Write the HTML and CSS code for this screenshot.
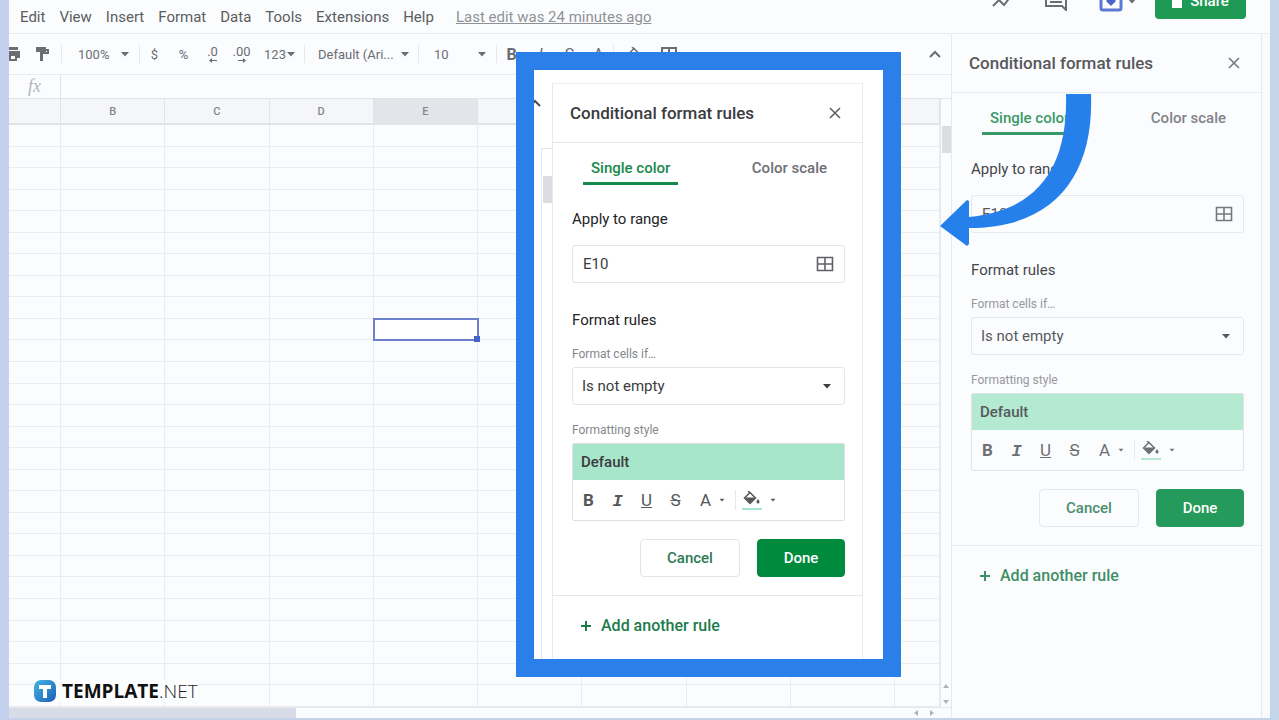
FILE: index.html
```html
<!DOCTYPE html>
<html lang="en">
<head>
    <meta charset="UTF-8">
    <meta name="viewport" content="width=device-width, initial-scale=1.0">
    <title>Conditional format rules</title>
    <link rel="stylesheet" href="styles.css">
</head>
<body>

<!-- Shared icons -->
<svg class="icon-defs" aria-hidden="true">
    <symbol id="i-caret" viewBox="0 0 10 10"><path d="M1 3h8L5 7.500z" fill="currentColor"/></symbol>
    <symbol id="i-close" viewBox="0 0 12 12"><path d="M1 1l10 10M11 1L1 11" fill="none" stroke="currentColor" stroke-width="1.600"/></symbol>
    <symbol id="i-grid" viewBox="0 0 18 16"><path d="M1.500 1.500h15v13h-15zM1.500 8h15M9 1.500v13" fill="none" stroke="currentColor" stroke-width="1.600"/></symbol>
    <symbol id="i-plus" viewBox="0 0 12 12"><path d="M6 1v10M1 6h10" fill="none" stroke="currentColor" stroke-width="2"/></symbol>
    <symbol id="i-chevron" viewBox="0 0 12 8"><path d="M1 7l5-5 5 5" fill="none" stroke="currentColor" stroke-width="2"/></symbol>
    <symbol id="i-fill" viewBox="0 0 18 14"><path d="M5 0l2 2" stroke="currentColor" stroke-width="1.500"/><path d="M7 1.500l5.500 5.500L7 12.500 1.500 7z" fill="none" stroke="currentColor" stroke-width="1.500"/><path d="M2 6.500h10.500L7 12.500z" fill="currentColor"/><path d="M15 8c1 1.500 1.500 2 1.500 3a1.500 1.500 0 0 1-3 0c0-1 .5-1.500 1.500-3z" fill="currentColor"/></symbol>
    <symbol id="i-paint" viewBox="0 0 16 16"><path d="M2 1h10v2h3v5H9v7H6V6h7V5h-1v1H2z" fill="currentColor"/></symbol>
    <symbol id="i-print" viewBox="0 0 16 16"><path d="M3 1h10v3H3zM1 5h14v7h-3v3H4v-3H1zm5 5v3h4v-3z" fill="currentColor" fill-rule="evenodd"/></symbol>
    <symbol id="i-borders" viewBox="0 0 16 14"><path d="M1 1h14v12H1zM1 7h14M8 1v12" fill="none" stroke="currentColor" stroke-width="2"/></symbol>
</svg>

<div class="window">
    <header class="menubar">
        <nav class="menus">
            <a href="#">Edit</a>
            <a href="#">View</a>
            <a href="#">Insert</a>
            <a href="#">Format</a>
            <a href="#">Data</a>
            <a href="#">Tools</a>
            <a href="#">Extensions</a>
            <a href="#">Help</a>
            <a href="#" class="last-edit">Last edit was 24 minutes ago</a>
        </nav>
        <div class="actions">
            <button class="action" aria-label="Activity"><svg width="22" height="16" viewBox="0 0 22 16"><path d="M2 13l6-6 5 5 7-9" fill="none" stroke="currentColor" stroke-width="2"/></svg></button>
            <button class="action" aria-label="Comments"><svg width="22" height="20" viewBox="0 0 22 20"><path d="M1 1h20v18l-4-4H1zM5 5h12M5 8h12M5 11h12" fill="none" stroke="currentColor" stroke-width="2"/></svg></button>
            <button class="action meet" aria-label="Present">
                <svg width="24" height="22" viewBox="0 0 24 22"><rect x="2" y="2" width="20" height="18" rx="2" fill="#fff" stroke="#5b78d6" stroke-width="3"/><path d="M12 6l5 5-5 5-5-5z" fill="#4c64cc"/></svg>
                <svg width="10" height="10"><use href="#i-caret"/></svg>
            </button>
            <button class="share"><svg width="10" height="14" viewBox="0 0 10 14"><path d="M0 6h10v8H0z" fill="#fff"/><path d="M2 6V3a3 3 0 0 1 6 0v3" fill="none" stroke="#fff" stroke-width="2"/></svg>Share</button>
        </div>
    </header>

    <div class="workspace">
        <main class="editor">
            <div class="toolbar">
                <button class="tool tool-half" aria-label="Print"><svg width="16" height="16"><use href="#i-print"/></svg></button>
                <button class="tool tool-paint" aria-label="Paint format"><svg width="16" height="16"><use href="#i-paint"/></svg></button>
                <span class="rule"></span>
                <button class="tool tool-menu">100% <svg width="10" height="10"><use href="#i-caret"/></svg></button>
                <span class="rule"></span>
                <button class="tool">$</button>
                <button class="tool">%</button>
                <button class="tool tool-decimal">.0<svg width="8" height="5" viewBox="0 0 8 5"><path d="M3 0v2h5v1H3v2L0 2.500z" fill="currentColor"/></svg></button>
                <button class="tool tool-decimal">.00<svg width="8" height="5" viewBox="0 0 8 5"><path d="M5 0v2H0v1h5v2l3-2.500z" fill="currentColor"/></svg></button>
                <button class="tool tool-format">123<svg width="10" height="10"><use href="#i-caret"/></svg></button>
                <span class="rule"></span>
                <button class="tool tool-font">Default (Ari... <svg width="10" height="10"><use href="#i-caret"/></svg></button>
                <span class="rule"></span>
                <button class="tool tool-size">10 <svg width="10" height="10"><use href="#i-caret"/></svg></button>
                <span class="rule"></span>
                <button class="tool tool-style"><b>B</b></button>
                <button class="tool tool-style"><i>I</i></button>
                <button class="tool tool-style"><s>S</s></button>
                <button class="tool tool-style">A</button>
                <span class="rule"></span>
                <button class="tool tool-wide" aria-label="Fill color"><svg width="18" height="14"><use href="#i-fill"/></svg></button>
                <button class="tool" aria-label="Borders"><svg width="16" height="14"><use href="#i-borders"/></svg></button>
                <button class="tool tool-collapse" aria-label="Hide the menus"><svg width="12" height="8"><use href="#i-chevron"/></svg></button>
            </div>
            <div class="formula">
                <span class="fx">fx</span>
                <input type="text" class="formula-input" aria-label="Formula">
            </div>
            <div class="sheet">
                <table class="cells">
                    <colgroup>
                        <col class="col-first"><col><col><col><col><col><col><col><col><col class="col-last">
                    </colgroup>
                    <thead>
                        <tr><th></th><th>B</th><th>C</th><th>D</th><th class="active">E</th><th></th><th></th><th></th><th></th><th></th></tr>
                    </thead>
                    <tbody id="rows"></tbody>
                </table>
                <div class="vscroll">
                    <span class="vthumb"></span>
                    <svg width="6" height="22" viewBox="0 0 6 22"><path d="M0 5h6L3 1zM0 17h6l-3 4z" fill="currentColor"/></svg>
                </div>
            </div>
            <div class="hscroll">
                <span class="hthumb"></span>
                <svg width="22" height="6" viewBox="0 0 22 6"><path d="M5 0v6L1 3zM17 0v6l4-3z" fill="currentColor"/></svg>
            </div>
            <div class="brand">
                <svg width="22" height="22" viewBox="0 0 22 22"><defs><linearGradient id="logo" x2="1" y2="1"><stop offset="0" stop-color="#45b5e4"/><stop offset="1" stop-color="#1b5fb4"/></linearGradient></defs><rect width="22" height="22" rx="7" fill="url(#logo)"/><path d="M5 5h12v4h-4v9H9V9H5z" fill="#fff"/></svg>
                <span class="brand-name"><b>TEMPLATE</b>.NET</span>
            </div>
        </main>

        <aside class="side">
            <section class="panel panel-dim">
                <div class="panel-head">
                    <h2>Conditional format rules</h2>
                    <button class="icon-btn" aria-label="Close"><svg width="12" height="12"><use href="#i-close"/></svg></button>
                </div>
                <div class="tabs">
                    <button class="tab tab-on">Single color</button>
                    <button class="tab">Color scale</button>
                </div>
                <form class="panel-form">
                    <label class="heading" for="range-side">Apply to range</label>
                    <div class="field">
                        <input type="text" id="range-side" value="E10">
                        <button type="button" class="icon-btn" aria-label="Select data range"><svg width="18" height="16"><use href="#i-grid"/></svg></button>
                    </div>
                    <h3 class="heading">Format rules</h3>
                    <label class="hint" for="rule-side">Format cells if…</label>
                    <div class="field select-field">
                        <select id="rule-side"><option>Is not empty</option></select>
                        <svg width="10" height="10"><use href="#i-caret"/></svg>
                    </div>
                    <span class="hint">Formatting style</span>
                    <div class="style-box">
                        <button type="button" class="style-default">Default</button>
                        <div class="style-tools">
                            <button type="button"><b>B</b></button>
                            <button type="button"><i>I</i></button>
                            <button type="button"><u>U</u></button>
                            <button type="button"><s>S</s></button>
                            <button type="button" class="with-caret">A<svg width="6" height="6"><use href="#i-caret"/></svg></button>
                            <span class="rule"></span>
                            <button type="button" class="with-caret" aria-label="Fill color"><span class="fill"><svg width="18" height="14"><use href="#i-fill"/></svg></span><svg width="6" height="6"><use href="#i-caret"/></svg></button>
                        </div>
                    </div>
                    <div class="buttons">
                        <button type="button" class="btn">Cancel</button>
                        <button type="button" class="btn btn-done">Done</button>
                    </div>
                </form>
                <button class="add-rule"><svg width="12" height="12"><use href="#i-plus"/></svg>Add another rule</button>
            </section>
            <svg class="pointer" width="156" height="156" viewBox="0 0 156 156"><path d="M128 2H153C156 83 117 136 31 136V152L29 154 2 134 29 108 31 109V125C102 118 130 73 128 2z" fill="#2680eb"/></svg>
        </aside>

        <div class="callout">
            <div class="callout-edge">
                <svg width="12" height="8"><use href="#i-chevron"/></svg>
                <div class="vscroll"><span class="vthumb"></span></div>
            </div>
            <section class="panel">
                <div class="panel-head">
                    <h2>Conditional format rules</h2>
                    <button class="icon-btn" aria-label="Close"><svg width="12" height="12"><use href="#i-close"/></svg></button>
                </div>
                <div class="tabs">
                    <button class="tab tab-on">Single color</button>
                    <button class="tab">Color scale</button>
                </div>
                <form class="panel-form">
                    <label class="heading" for="range">Apply to range</label>
                    <div class="field">
                        <input type="text" id="range" value="E10">
                        <button type="button" class="icon-btn" aria-label="Select data range"><svg width="18" height="16"><use href="#i-grid"/></svg></button>
                    </div>
                    <h3 class="heading">Format rules</h3>
                    <label class="hint" for="rule">Format cells if…</label>
                    <div class="field select-field">
                        <select id="rule"><option>Is not empty</option></select>
                        <svg width="10" height="10"><use href="#i-caret"/></svg>
                    </div>
                    <span class="hint">Formatting style</span>
                    <div class="style-box">
                        <button type="button" class="style-default">Default</button>
                        <div class="style-tools">
                            <button type="button"><b>B</b></button>
                            <button type="button"><i>I</i></button>
                            <button type="button"><u>U</u></button>
                            <button type="button"><s>S</s></button>
                            <button type="button" class="with-caret">A<svg width="6" height="6"><use href="#i-caret"/></svg></button>
                            <span class="rule"></span>
                            <button type="button" class="with-caret" aria-label="Fill color"><span class="fill"><svg width="18" height="14"><use href="#i-fill"/></svg></span><svg width="6" height="6"><use href="#i-caret"/></svg></button>
                        </div>
                    </div>
                    <div class="buttons">
                        <button type="button" class="btn">Cancel</button>
                        <button type="button" class="btn btn-done">Done</button>
                    </div>
                </form>
                <button class="add-rule"><svg width="12" height="12"><use href="#i-plus"/></svg>Add another rule</button>
            </section>
        </div>
    </div>
</div>

<script src="script.js"></script>
</body>
</html>
```

FILE: styles.css
```css
/* --- Base --- */
* {
    box-sizing: border-box;
}

body {
    margin: 0;
    background: linear-gradient(90deg, #c3d0ee, #c5d5e9);
    font-family: Roboto, "Liberation Sans", sans-serif;
    font-size: 15px;
    color: #4a4c50;
}

button,
input,
select {
    font: inherit;
    color: inherit;
    background: none;
    border: none;
    padding: 0;
    margin: 0;
}

h2,
h3 {
    margin: 0;
}

svg {
    display: block;
    flex: none;
}

.icon-defs {
    display: none;
}

.window {
    display: flex;
    flex-direction: column;
    height: 100vh;
    margin: 0 9px;
    border-bottom: 2px solid #c5d3ea;
    background: #fbfcfe;
    overflow: hidden;
}

/* --- Menu bar --- */
.menubar {
    display: flex;
    justify-content: space-between;
    height: 34px;
    border-bottom: 1px solid #eaebef;
}

.menus {
    display: flex;
    align-items: center;
    gap: 14px;
    padding-left: 11px;
}

.menus a {
    color: #5a5c60;
    text-decoration: none;
}

.menus .last-edit {
    margin-left: 8px;
    color: #909297;
    text-decoration: underline;
}

/* the title row is scrolled half out of view */
.actions {
    display: flex;
    align-items: center;
    gap: 32px;
    height: 36px;
    margin-top: -17px;
    padding-right: 24px;
    color: #6b6d72;
}

.action {
    display: flex;
    align-items: center;
    gap: 4px;
}

.share {
    display: flex;
    align-items: center;
    justify-content: center;
    gap: 8px;
    width: 91px;
    height: 36px;
    margin-left: -14px;
    border-radius: 4px;
    background: #1e9a55;
    color: #fff;
    font-weight: 500;
}

/* --- Editor --- */
.workspace {
    position: relative;
    display: flex;
    flex: 1;
    min-height: 0;
}

.editor {
    position: relative;
    display: flex;
    flex-direction: column;
    flex: 1;
    min-width: 0;
}

.toolbar {
    display: flex;
    align-items: center;
    height: 41px;
    padding-left: 1px;
    border-bottom: 1px solid #eaebef;
    font-size: 13px;
    color: #6b6d72;
}

.tool {
    display: flex;
    align-items: center;
    justify-content: center;
    width: 29px;
    color: #6b6d72;
}

.tool-half {
    width: 18px;
    margin-left: -6px;
}

.tool-paint {
    width: 39px;
}

.tool-menu {
    justify-content: space-between;
    width: 77px;
    padding: 0 9px 0 16px;
}

.tool-decimal {
    flex-direction: column;
    align-items: center;
    line-height: 13px;
}

.tool-format {
    width: 48px;
}

.tool-font {
    justify-content: space-between;
    width: 113px;
    padding: 0 8px 0 13px;
}

.tool-size {
    justify-content: space-between;
    width: 77px;
    padding: 0 9px 0 15px;
}

.tool-style {
    font-size: 16px;
}

.tool-wide {
    width: 36px;
    margin-left: 4px;
}

.tool-collapse {
    width: 33px;
    margin-left: auto;
}

.toolbar .rule {
    width: 1px;
    height: 18px;
    background: #e6e7eb;
}

.formula {
    display: flex;
    height: 23px;
}

.fx {
    width: 52px;
    border-right: 1px solid #e2e3e7;
    text-align: center;
    font: italic 18px/22px "Liberation Serif", serif;
    color: #b4b6bb;
}

.formula-input {
    flex: 1;
}

.sheet {
    display: flex;
    flex: 1;
    min-height: 0;
}

.cells {
    flex: 1;
    width: 100%;
    height: 100%;
    table-layout: fixed;
    border-collapse: separate;
    border-spacing: 0;
}

.col-first {
    width: 52px;
}

.col-last {
    width: 45px;
}

.cells th {
    height: 27px;
    padding: 0;
    border: solid #e2e3e7;
    border-width: 1px 1px 2px 0;
    background: #f5f6f9;
    font-size: 11px;
    font-weight: 500;
    color: #85878c;
}

.cells th.active {
    background: #e4e5ea;
}

.cells td {
    padding: 0;
    border: solid #ebecf0;
    border-width: 0 1px 1px 0;
}

.cells td.selected {
    position: relative;
    outline: 2px solid #6c80cf;
    outline-offset: -1px;
    background: #fff;
}

.cells td.selected::after {
    content: "";
    position: absolute;
    right: -3px;
    bottom: -3px;
    width: 6px;
    height: 6px;
    background: #4564cb;
}

.vscroll {
    display: flex;
    flex-direction: column;
    justify-content: space-between;
    align-items: center;
    width: 11px;
    padding: 27px 0 2px;
    border: solid #e6e7eb;
    border-width: 1px 0 0 1px;
    color: #b0b2b8;
}

.vthumb {
    width: 9px;
    height: 27px;
    background: #dcdde1;
}

.hscroll {
    display: flex;
    align-items: center;
    justify-content: space-between;
    height: 11px;
    padding-right: 16px;
    border-top: 1px solid #e6e7eb;
    color: #b0b2b8;
}

.hthumb {
    width: 31%;
    height: 10px;
    background: #d8dce7;
}

/* --- Watermark over the sheet --- */
.brand {
    position: absolute;
    left: 25px;
    bottom: 16px;
    display: flex;
    align-items: center;
    gap: 6px;
    background: #fcfdfe;
}

.brand-name {
    font: 300 19px/22px "Open Sans", "Noto Sans", sans-serif;
    color: #222;
}

.brand-name b {
    font-weight: 700;
    color: #111;
}

/* --- Side area --- */
.side {
    position: relative;
    width: 319px;
    padding-right: 8px;
    background: #f8fafe;
}

.side .panel {
    height: 100%;
}

.pointer {
    position: absolute;
    left: -13px;
    top: 58px;
}

/* --- Rules panel --- */
.panel {
    width: 311px;
    border: solid #e8e9ed;
    border-width: 0 1px;
    background: #fff;
    color: #3a3c40;
}

.panel-dim {
    background: #fbfcfe;
}

.panel-dim > * {
    opacity: 0.85;
}

.panel-head {
    display: flex;
    align-items: center;
    justify-content: space-between;
    height: 59px;
    padding: 0 21px 0 17px;
    border-bottom: 1px solid #e6e7eb;
}

.panel-head h2 {
    font-size: 17px;
    font-weight: 500;
}

.icon-btn {
    color: #5f6165;
}

.tabs {
    display: flex;
    justify-content: space-between;
    padding: 14px 27px 0 30px;
}

.tab {
    height: 28px;
    padding: 0 8px 4px;
    border-bottom: 3px solid transparent;
    font-weight: 500;
    color: #6d6f74;
}

.tab-on {
    border-color: #17894e;
    color: #17894e;
}

.panel-form {
    display: flex;
    flex-direction: column;
    padding: 24px 17px 18px 19px;
    border-bottom: 1px solid #e6e7eb;
}

.heading {
    font-size: 15px;
    font-weight: 400;
    line-height: 20px;
    color: #222428;
}

.hint {
    font-size: 12px;
    line-height: 16px;
    color: #85878c;
}

.field {
    display: flex;
    align-items: center;
    height: 38px;
    margin: 16px 0 27px;
    padding: 0 10px;
    border: 1px solid #e4e5e9;
    border-radius: 3px;
}

.field input,
.field select {
    flex: 1;
    min-width: 0;
}

.field select {
    appearance: none;
}

h3.heading {
    margin-bottom: 16px;
}

.select-field {
    margin: 5px 0 17px;
    padding: 0 12px 0 9px;
}

.style-box {
    margin-top: 5px;
    border: 1px solid #dfe0e4;
    border-radius: 2px;
}

.style-default {
    width: 100%;
    height: 36px;
    padding-left: 8px;
    background: #a8e6cb;
    text-align: left;
    font-weight: 500;
}

.style-tools {
    display: flex;
    align-items: center;
    height: 40px;
    padding-left: 1px;
    color: #55575b;
}

.style-tools button {
    width: 29px;
    font-size: 17px;
}

.style-tools .with-caret {
    display: flex;
    align-items: center;
    justify-content: center;
    gap: 8px;
    width: 45px;
}

.style-tools .rule {
    width: 1px;
    height: 20px;
    background: #e6e7eb;
}

.style-tools i {
    font-family: "Liberation Mono", monospace;
    font-weight: bold;
}

.fill {
    padding: 0 1px 3px;
    border-bottom: 2px solid #a8e6cb;
}

.buttons {
    display: flex;
    justify-content: flex-end;
    gap: 17px;
    margin-top: 18px;
}

.btn {
    width: 100px;
    height: 38px;
    border: 1px solid #e4e5e9;
    border-radius: 4px;
    font-weight: 500;
    color: #2e7a55;
}

.btn-done {
    width: 88px;
    border-color: #008a3e;
    background: #008a3e;
    color: #fff;
}

.add-rule {
    display: flex;
    align-items: center;
    gap: 9px;
    padding: 20px 27px;
    font-size: 16px;
    font-weight: 500;
    color: #1c7c4c;
}

/* --- Enlarged callout --- */
.callout {
    position: absolute;
    top: 18px;
    right: 369px;
    display: flex;
    width: 385px;
    height: 625px;
    padding-top: 13px;
    border: 18px solid #2a80e8;
    background: #fff;
}

.callout .panel {
    border-top: 1px solid #f0f1f4;
}

.callout-edge {
    display: flex;
    flex-direction: column;
    gap: 41px;
    align-items: flex-end;
    width: 18px;
    padding-top: 16px;
    overflow: hidden;
}

.callout-edge > svg {
    align-self: flex-start;
    margin-left: -5px;
}

.callout-edge .vscroll {
    flex: 1;
    justify-content: flex-start;
}
```

FILE: script.js
```js
const ROWS = 27;
const COLS = 10;
const body = document.getElementById('rows');

for (let r = 1; r <= ROWS; r++) {
    const row = body.insertRow();
    for (let c = 0; c < COLS; c++) {
        const cell = row.insertCell();
        // E10
        if (r === 10 && c === 4) {
            cell.className = 'selected';
        }
    }
}
```
